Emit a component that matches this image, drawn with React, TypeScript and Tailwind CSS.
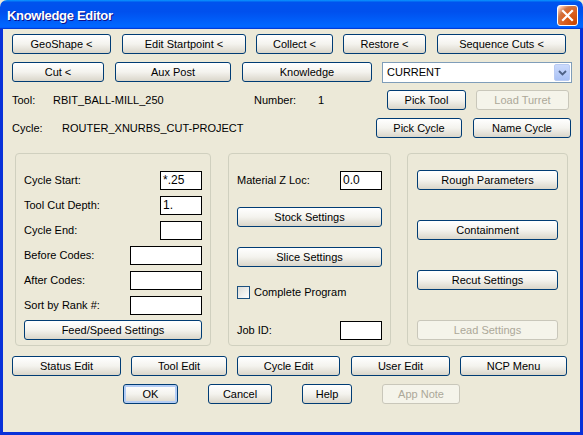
import clsx from "clsx";

type BtnProps = {
  label: string;
  className?: string;
  disabled?: boolean;
  focused?: boolean;
};

// XP "Luna" push button
function Btn({ label, className = "", disabled = false, focused = false }: BtnProps) {
  return (
    <button
      type="button"
      className={clsx(
        "h-[20px] shrink-0 rounded-[3px] border text-[11px] leading-none",
        disabled
          ? "border-[#c9c7ba] bg-[#f5f4ea] text-[#aca899]"
          : "border-[#003c74] bg-linear-to-b from-white via-[#f4f3ee] to-[#dad6ca] text-black",
        focused && "shadow-[inset_0_0_0_2px_#b4cdf5]",
        className
      )}
    >
      {label}
    </button>
  );
}

function Field({ value = "", className = "" }: { value?: string; className?: string }) {
  return (
    <div
      className={clsx(
        "h-[19px] shrink-0 border border-black bg-white pl-[2px] text-[12px] leading-[17px]",
        className
      )}
    >
      {value}
    </div>
  );
}

function FieldRow({ label, value, wide }: { label: string; value?: string; wide?: boolean }) {
  return (
    <div className="flex h-[19px] items-center justify-between">
      <span>{label}</span>
      <Field value={value} className={wide ? "w-[72px]" : "w-[42px]"} />
    </div>
  );
}

function TitleBar() {
  return (
    <div className="flex h-[29px] items-center justify-between rounded-t-[7px] bg-[linear-gradient(180deg,#0997ff_0%,#0053ee_8%,#0050ee_40%,#0066ff_88%,#0066ff_93%,#005bff_95%,#003dd7_96%,#003dd7_100%)]">
      <span className="ml-[7px] mt-[2px] text-[13px] font-bold tracking-[-0.3px] text-white [text-shadow:1px_1px_#0f1089]">
        Knowledge Editor
      </span>
      <div className="mr-[5px] mt-[2px] flex h-[21px] w-[21px] items-center justify-center rounded-[3px] border border-white bg-[radial-gradient(circle_at_90%_90%,#cc4600_0%,#dc6527_55%,#cd7546_70%,#ffccb2_90%,#ffffff_100%)]">
        <svg width="13" height="13" viewBox="0 0 13 13">
          <path d="M2 2 L11 11 M11 2 L2 11" stroke="white" strokeWidth="2.2" strokeLinecap="square" />
        </svg>
      </div>
    </div>
  );
}

export default function App() {
  return (
    <div className="h-[435px] w-[583px] overflow-hidden bg-[#ece9d8] font-['Liberation_Sans',Arial,sans-serif] text-[11px] text-black">
      <TitleBar />
      <div className="h-[406px] border-x-[3px] border-b-[3px] border-[#0831d9] bg-[#ece9d8]">
        {/* top command row */}
        <div className="flex pt-[5px]">
          <Btn label="GeoShape <" className="ml-[9px] w-[99px]" />
          <Btn label="Edit Startpoint <" className="ml-[11px] w-[124px]" />
          <Btn label="Collect <" className="ml-[10px] w-[77px]" />
          <Btn label="Restore <" className="ml-[10px] w-[83px]" />
          <Btn label="Sequence Cuts <" className="ml-[11px] w-[129px]" />
        </div>

        <div className="mt-[8px] flex items-start">
          <Btn label="Cut <" className="ml-[9px] w-[92px]" />
          <Btn label="Aux Post" className="ml-[11px] w-[116px]" />
          <Btn label="Knowledge" className="ml-[11px] w-[130px]" />
          <div className="ml-[10px] flex h-[21px] w-[190px] items-center justify-between border border-[#7f9db9] bg-white">
            <span className="pl-[4px]">CURRENT</span>
            <div className="mr-[1px] flex h-[17px] w-[16px] items-center justify-center rounded-[2px] border border-[#b9cbf3] bg-linear-to-b from-[#cbdafc] to-[#a9c1f5]">
              <svg width="9" height="6" viewBox="0 0 9 6">
                <path d="M1 1 L4.5 4.5 L8 1" fill="none" stroke="#4d6185" strokeWidth="1.8" />
              </svg>
            </div>
          </div>
        </div>

        {/* tool / cycle info */}
        <div className="mt-[7px] flex h-[20px] items-center pl-[9px]">
          <span className="w-[41px]">Tool:</span>
          <span className="w-[201px]">RBIT_BALL-MILL_250</span>
          <span className="w-[64px]">Number:</span>
          <span className="w-[69px]">1</span>
          <Btn label="Pick Tool" className="w-[79px]" />
          <Btn label="Load Turret" disabled className="ml-[10px] w-[93px]" />
        </div>

        <div className="mt-[8px] flex h-[20px] items-center pl-[9px]">
          <span className="w-[50px]">Cycle:</span>
          <span className="w-[314px]">ROUTER_XNURBS_CUT-PROJECT</span>
          <Btn label="Pick Cycle" className="w-[86px]" />
          <Btn label="Name Cycle" className="ml-[11px] w-[98px]" />
        </div>

        {/* group boxes */}
        <div className="mt-[15px] flex h-[193px]">
          <div className="ml-[12px] flex w-[196px] flex-col rounded-[4px] border border-[#d0d0bf] px-[8px] pt-[17px]">
            <div className="flex flex-col gap-[6px]">
              <FieldRow label="Cycle Start:" value="*.25" />
              <FieldRow label="Tool Cut Depth:" value="1." />
              <FieldRow label="Cycle End:" />
              <FieldRow label="Before Codes:" wide />
              <FieldRow label="After Codes:" wide />
              <FieldRow label="Sort by Rank #:" wide />
            </div>
            <Btn label="Feed/Speed Settings" className="mt-[5px] w-full" />
          </div>

          <div className="ml-[17px] flex w-[163px] flex-col rounded-[4px] border border-[#d0d0bf] px-[8px] pt-[17px]">
            <FieldRow label="Material Z Loc:" value="0.0" />
            <Btn label="Stock Settings" className="mt-[17px] w-full" />
            <Btn label="Slice Settings" className="mt-[20px] w-full" />
            <div className="mt-[19px] flex h-[13px] items-center gap-[4px]">
              <div className="h-[13px] w-[13px] border border-[#1c5180] bg-linear-to-br from-[#dcdcd7] to-white" />
              <span>Complete Program</span>
            </div>
            <div className="mt-[22px]">
              <FieldRow label="Job ID:" />
            </div>
          </div>

          <div className="ml-[16px] flex w-[161px] flex-col gap-[30px] rounded-[4px] border border-[#d0d0bf] px-[9px] pt-[16px]">
            <Btn label="Rough Parameters" className="w-full" />
            <Btn label="Containment" className="w-full" />
            <Btn label="Recut Settings" className="w-full" />
            <Btn label="Lead Settings" disabled className="w-full" />
          </div>
        </div>

        {/* bottom rows */}
        <div className="mt-[10px] flex">
          <Btn label="Status Edit" className="ml-[9px] w-[109px]" />
          <Btn label="Tool Edit" className="ml-[10px] w-[96px]" />
          <Btn label="Cycle Edit" className="ml-[10px] w-[103px]" />
          <Btn label="User Edit" className="ml-[11px] w-[99px]" />
          <Btn label="NCP Menu" className="ml-[10px] w-[107px]" />
        </div>

        <div className="mt-[8px] flex">
          <Btn label="OK" focused className="ml-[120px] w-[55px]" />
          <Btn label="Cancel" className="ml-[30px] w-[64px]" />
          <Btn label="Help" className="ml-[30px] w-[50px]" />
          <Btn label="App Note" disabled className="ml-[30px] w-[78px]" />
        </div>
      </div>
    </div>
  );
}
